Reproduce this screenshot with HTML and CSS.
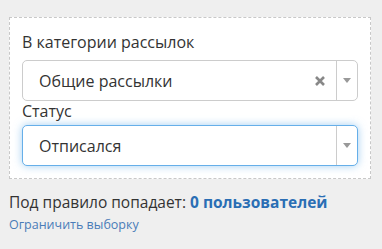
FILE: index.html
```html
<!DOCTYPE html>
<html lang="ru">
<head>
  <meta charset="UTF-8">
  <meta name="viewport" content="width=device-width, initial-scale=1.0">
  <title>Правило</title>
  <link rel="stylesheet" href="styles.css">
</head>
<body>
  <div class="rule-box">
    <div class="field">
      <div class="field-label">В категории рассылок</div>
      <div class="select">
        <span class="select-value">Общие рассылки</span>
        <span class="select-clear">
          <svg width="10" height="10" viewBox="0 0 10 10"><path d="M1 1 L9 9 M9 1 L1 9" stroke="#888" stroke-width="2.6"/></svg>
        </span>
        <span class="select-arrow"></span>
      </div>
    </div>
    <div class="field">
      <div class="field-label">Статус</div>
      <div class="select focused">
        <span class="select-value">Отписался</span>
        <span class="select-arrow"></span>
      </div>
    </div>
  </div>
  <div class="summary">
    Под правило попадает: <b class="count">0 пользователей</b>
  </div>
  <a class="limit-link" href="#">Ограничить выборку</a>
</body>
</html>
```

FILE: styles.css
```css
* {
  box-sizing: border-box;
}
body {
  font-family: 'Open Sans', 'Liberation Sans', sans-serif;
  background-color: #efefef;
  color: #333;
  margin: 0;
  padding: 17px 11px 0 9px;
}
.rule-box {
  background: #fff;
  border: 1px dashed #c8c8c8;
  padding: 14px 12px 12px 12px;
}
.field-label {
  font-size: 16px;
  line-height: 20px;
  margin-bottom: 8px;
}
.field + .field .field-label {
  margin-bottom: 4px;
}
.select {
  display: flex;
  align-items: center;
  height: 41px;
  border: 1px solid #ccc;
  border-radius: 5px;
  background: #fff;
}
.select.focused {
  border-color: #66afe9;
  box-shadow: 0 0 8px rgba(102, 175, 233, 0.6);
}
.select-value {
  flex: 1;
  padding-left: 16px;
  font-size: 16px;
}
.select-clear {
  display: flex;
  padding-right: 11px;
}
.select-arrow {
  align-self: stretch;
  width: 21px;
  border-left: 1px solid #ccc;
  display: flex;
  align-items: center;
  justify-content: center;
}
.select-arrow::after {
  content: "";
  border-left: 4px solid transparent;
  border-right: 4px solid transparent;
  border-top: 5px solid #999;
}
.summary {
  margin-top: 13px;
  font-size: 15.5px;
  line-height: 20px;
}
.count {
  color: #2a6eb4;
}
.limit-link {
  display: block;
  margin-top: 4px;
  font-size: 12.5px;
  color: #4a7cb8;
  text-decoration: none;
}
```
